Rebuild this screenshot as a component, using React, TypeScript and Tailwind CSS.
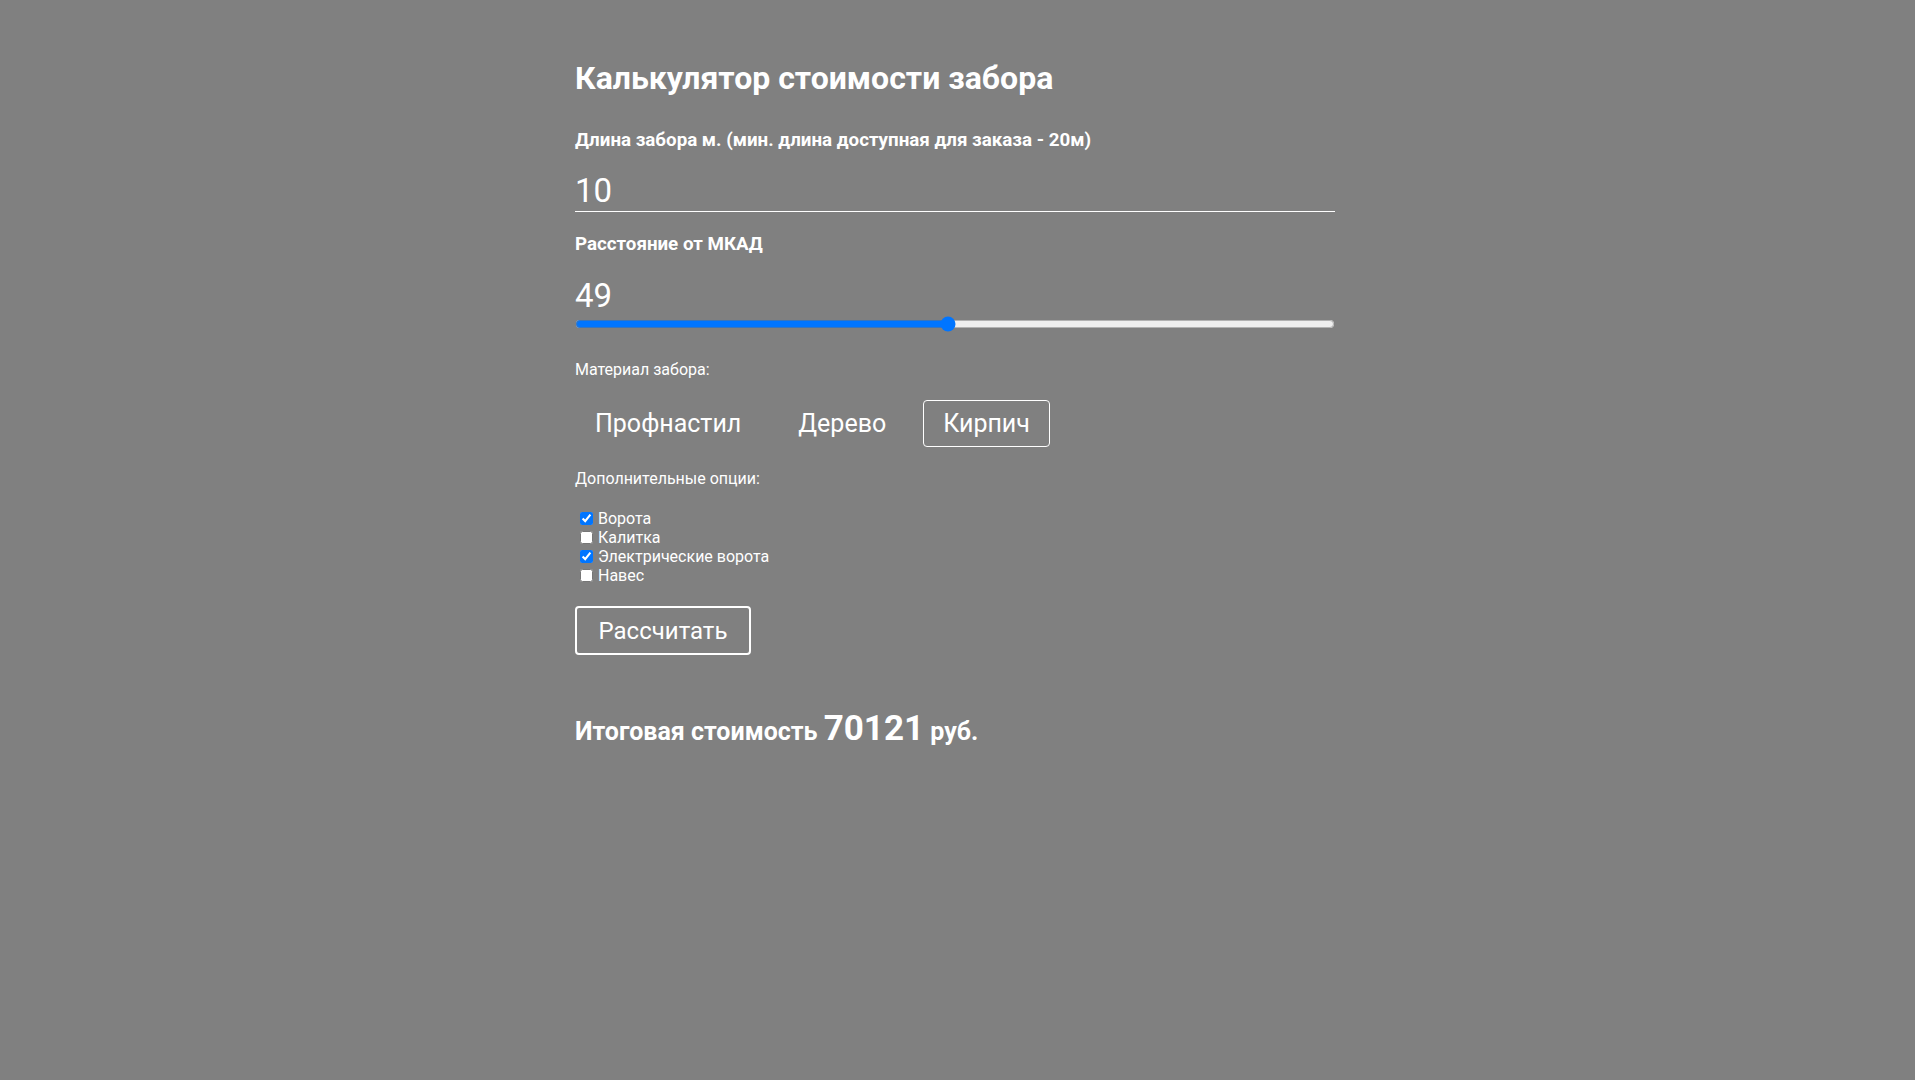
import { useState } from "react";

const materials = ["Профнастил", "Дерево", "Кирпич"];
const extras = [
  { id: "gate", label: "Ворота" },
  { id: "wicket", label: "Калитка" },
  { id: "egate", label: "Электрические ворота" },
  { id: "canopy", label: "Навес" },
];

export default function App() {
  const [length, setLength] = useState("10");
  const [distance, setDistance] = useState(49);
  const [material, setMaterial] = useState("Кирпич");
  const [checked, setChecked] = useState<Record<string, boolean>>({ gate: true, egate: true });

  return (
    <div className="min-h-screen bg-[#808080] text-white font-['Roboto',sans-serif]">
      <div className="mx-auto w-[765px] pt-[58px]">
        <h1 className="text-[32px] font-bold leading-[40px]">Калькулятор стоимости забора</h1>

        <label className="block mt-[30px] text-[18.75px] font-bold leading-[24px]">
          Длина забора м. (мин. длина доступная для заказа - 20м)
        </label>
        <input
          type="text"
          value={length}
          onChange={(e) => setLength(e.target.value)}
          className="mt-[19px] block w-[760px] bg-transparent border-0 border-b border-white text-[33px] font-normal leading-[40px] outline-none"
        />

        <label className="block mt-[20px] text-[18.75px] font-bold leading-[24px]">Расстояние от МКАД</label>
        <div className="mt-[20px] text-[33px] font-normal leading-[40px]">{distance}</div>
        <input
          type="range"
          min={0}
          max={100}
          value={distance}
          onChange={(e) => setDistance(Number(e.target.value))}
          className="block w-[760px] m-0"
        />

        <p className="mt-[28px] text-[16px] leading-[20px]">Материал забора:</p>
        <div className="mt-[20px] flex gap-[17px]">
          {materials.map((m) => (
            <button
              key={m}
              onClick={() => setMaterial(m)}
              className={
                "px-[19px] h-[47px] text-[25px] leading-none rounded-[4px] border " +
                (material === m ? "border-white" : "border-transparent")
              }
            >
              {m}
            </button>
          ))}
        </div>

        <p className="mt-[22px] text-[16px] leading-[20px]">Дополнительные опции:</p>
        <div className="mt-[20px] flex flex-col pl-[5px]">
          {extras.map((x) => (
            <label key={x.id} className="flex items-center gap-[5px] text-[16px] leading-[19px]">
              <input
                type="checkbox"
                checked={!!checked[x.id]}
                onChange={(e) => setChecked({ ...checked, [x.id]: e.target.checked })}
                className="m-0 w-[13px] h-[13px]"
              />
              {x.label}
            </label>
          ))}
        </div>

        <button className="mt-[21px] w-[176px] h-[49px] border-2 border-white rounded-[4px] text-[24px] leading-none">
          Рассчитать
        </button>

        <p className="mt-[54px] text-[25px] font-bold leading-[40px]">
          Итоговая стоимость <span className="text-[35px]">70121</span> руб.
        </p>
      </div>
    </div>
  );
}
